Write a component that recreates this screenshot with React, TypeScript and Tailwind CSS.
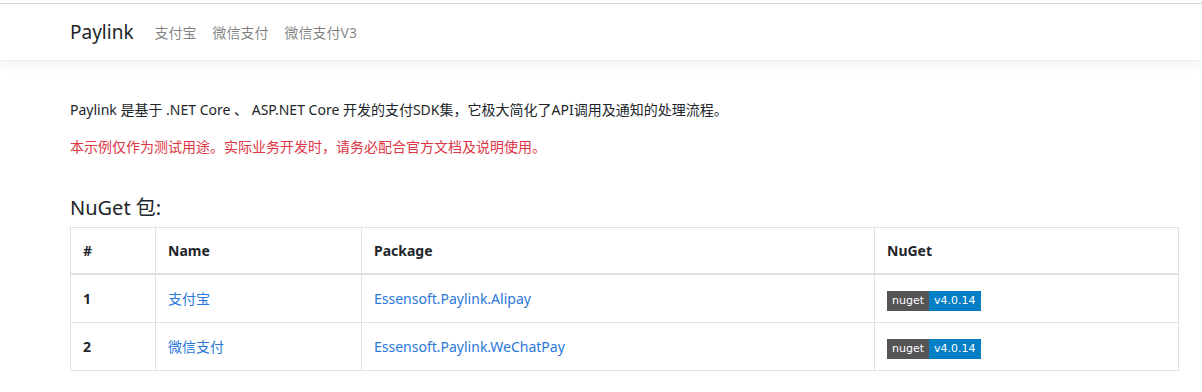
import React from 'react';

const packages = [
	{ id: 1, name: '支付宝', pkg: 'Essensoft.Paylink.Alipay', version: 'v4.0.14' },
	{ id: 2, name: '微信支付', pkg: 'Essensoft.Paylink.WeChatPay', version: 'v4.0.14' },
];

function NugetBadge({ version }: { version: string }) {
	return (
		<span className="inline-flex h-[20px] items-stretch text-[11px] leading-[20px] text-white font-['DejaVu_Sans',Verdana,sans-serif]">
			<span className="bg-[#555555] px-[5px]">nuget</span>
			<span className="bg-[#007ec6] px-[5px]">{version}</span>
		</span>
	);
}

export default function App() {
	return (
		<div className="min-h-[392px] bg-white pt-[3px] text-[14px] leading-[21px] text-[#212529] font-['Noto_Sans','Noto_Sans_CJK_SC',sans-serif]">
			{/* Navbar */}
			<header className="border-t border-b border-t-[#d6d6d6] border-b-[#eeeeee] bg-white shadow-[0_4px_12px_rgba(0,0,0,0.05)]">
				<nav className="flex h-[56px] items-center pl-[70px]">
					<a className="mr-[13px] text-[19px] leading-[30px] text-[#212529]">Paylink</a>
					<ul className="flex">
						{['支付宝', '微信支付', '微信支付V3'].map((item) => (
							<li key={item}>
								<a className="block px-[8px] text-[rgba(0,0,0,0.5)]">{item}</a>
							</li>
						))}
					</ul>
				</nav>
			</header>

			{/* Main */}
			<main className="pl-[70px] pt-[38px]">
				<p className="mb-[16px]">
					Paylink 是基于 .NET Core 、 ASP.NET Core 开发的支付SDK集，它极大简化了API调用及通知的处理流程。
				</p>
				<p className="mb-[16px] text-[#dc3545]">
					本示例仅作为测试用途。实际业务开发时，请务必配合官方文档及说明使用。
				</p>

				<h4 className="mt-[39px] mb-[7px] text-[20px] leading-[24px] font-normal">NuGet 包:</h4>

				<table className="w-[1109px] border-collapse border border-[#dee2e6] text-left">
					<thead>
						<tr>
							<th className="w-[85px] border border-b-2 border-[#dee2e6] px-[12px] py-[12px] font-bold">#</th>
							<th className="w-[206px] border border-b-2 border-[#dee2e6] px-[12px] py-[12px] font-bold">Name</th>
							<th className="w-[513px] border border-b-2 border-[#dee2e6] px-[12px] py-[12px] font-bold">Package</th>
							<th className="border border-b-2 border-[#dee2e6] px-[12px] py-[12px] font-bold">NuGet</th>
						</tr>
					</thead>
					<tbody>
						{packages.map((p) => (
							<tr key={p.id}>
								<th className="border border-[#dee2e6] px-[12px] py-[12px] font-bold">{p.id}</th>
								<td className="border border-[#dee2e6] px-[12px] py-[12px]">
									<a className="text-[#2a78d8]">{p.name}</a>
								</td>
								<td className="border border-[#dee2e6] px-[12px] py-[12px]">
									<a className="text-[#2a78d8]">{p.pkg}</a>
								</td>
								<td className="border border-[#dee2e6] px-[12px] pt-[13px] pb-[11px] align-middle">
									<NugetBadge version={p.version} />
								</td>
							</tr>
						))}
					</tbody>
				</table>
			</main>
		</div>
	);
}
